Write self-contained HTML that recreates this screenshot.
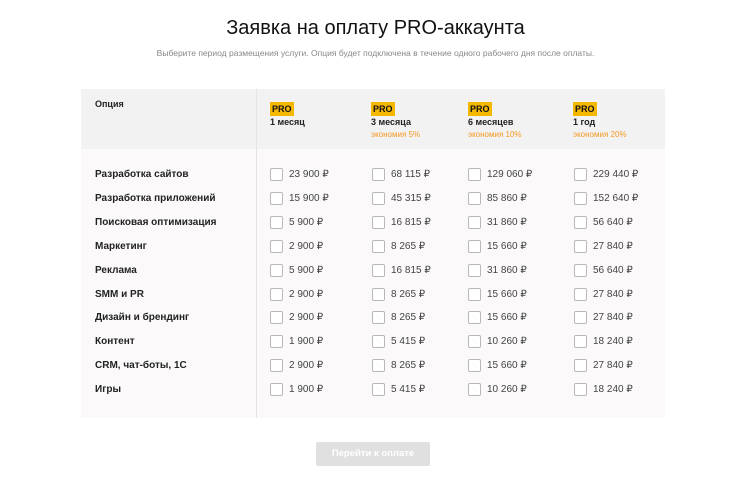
<!DOCTYPE html>
<html><head><meta charset="utf-8"><style>
*{margin:0;padding:0;box-sizing:border-box}
body{width:751px;height:490px;background:#fff;font-family:"Liberation Sans",sans-serif;position:relative;overflow:hidden;color:#222}
.abs{position:absolute}
h1{position:absolute;top:17px;left:0;width:751px;text-align:center;font-size:20px;font-weight:normal;color:#111}
.sub{top:48px;left:0;width:751px;text-align:center;font-size:8.5px;color:#888}
.head{left:81px;top:89px;width:584px;height:60px;background:#f2f2f2}
.body{left:81px;top:149px;width:584px;height:269px;background:#fbf9fa}
.div{left:256px;top:89px;width:1px;height:329px;background:#e4e4e4}
.opt{left:95px;top:99px;font-size:9px;font-weight:bold}
.pro{background:#f5b800;font-size:9px;font-weight:bold;padding:2px 2px;line-height:10px;color:#111}
.per{font-size:9px;font-weight:bold}
.eco{font-size:8px;color:#f59a23}
.lbl{left:95px;font-size:10px;font-weight:bold}
.cb{width:13px;height:13px;border:1px solid #b8b8b8;border-radius:2px;background:#fff}
.pr{font-size:10px;color:#444}
.btn{left:316px;top:442px;width:114px;height:24px;background:#e0e0e0;border-radius:2px;color:#fff;font-size:9.5px;font-weight:bold;text-align:center;line-height:24px}
</style></head><body>
<h1>Заявка на оплату PRO-аккаунта</h1>
<div class="abs sub">Выберите период размещения услуги. Опция будет подключена в течение одного рабочего дня после оплаты.</div>
<div class="abs head"></div>
<div class="abs body"></div>
<div class="abs div"></div>
<div class="abs opt">Опция</div>

<div class="abs" style="left:270px;top:99px"><span class="pro">PRO</span></div>
<div class="abs per" style="left:270px;top:117px">1 месяц</div>
<div class="abs" style="left:371px;top:99px"><span class="pro">PRO</span></div>
<div class="abs per" style="left:371px;top:117px">3 месяца</div>
<div class="abs eco" style="left:371px;top:130px">экономия 5%</div>
<div class="abs" style="left:468px;top:99px"><span class="pro">PRO</span></div>
<div class="abs per" style="left:468px;top:117px">6 месяцев</div>
<div class="abs eco" style="left:468px;top:130px">экономия 10%</div>
<div class="abs" style="left:573px;top:99px"><span class="pro">PRO</span></div>
<div class="abs per" style="left:573px;top:117px">1 год</div>
<div class="abs eco" style="left:573px;top:130px">экономия 20%</div>

<div id="rows"></div>
<script>
var rows=[["Разработка сайтов","23 900","68 115","129 060","229 440"],
["Разработка приложений","15 900","45 315","85 860","152 640"],
["Поисковая оптимизация","5 900","16 815","31 860","56 640"],
["Маркетинг","2 900","8 265","15 660","27 840"],
["Реклама","5 900","16 815","31 860","56 640"],
["SMM и PR","2 900","8 265","15 660","27 840"],
["Дизайн и брендинг","2 900","8 265","15 660","27 840"],
["Контент","1 900","5 415","10 260","18 240"],
["CRM, чат-боты, 1С","2 900","8 265","15 660","27 840"],
["Игры","1 900","5 415","10 260","18 240"]];
var xs=[270,372,468,574],h="";
rows.forEach(function(r,i){var y=175+i*23.9;
h+='<div class="abs lbl" style="top:'+(y-6)+'px">'+r[0]+'</div>';
for(var j=0;j<4;j++){h+='<div class="abs cb" style="left:'+xs[j]+'px;top:'+(y-7)+'px"></div><div class="abs pr" style="left:'+(xs[j]+19)+'px;top:'+(y-6)+'px">'+r[j+1]+' ₽</div>';}
});
document.getElementById("rows").innerHTML=h;
</script>
<div class="abs btn">Перейти к оплате</div>
</body></html>
